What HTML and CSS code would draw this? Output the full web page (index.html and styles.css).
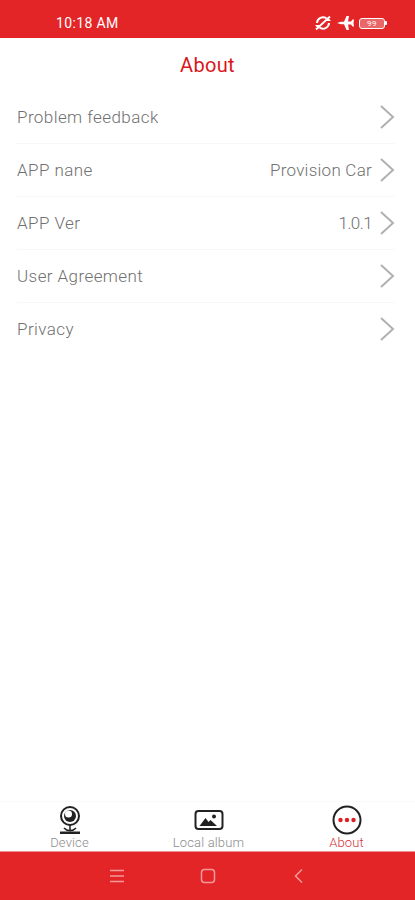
FILE: index.html
```html
<!DOCTYPE html>
<html lang="en">
<head>
<meta charset="utf-8">
<title>About</title>
<link rel="stylesheet" href="styles.css">
</head>
<body>
<div class="app">
  <header class="status">
    <span class="time">10:18 AM</span>
    <div class="status-icons">
      <svg width="18" height="16" viewBox="0 0 18 16"><path d="M3 8a6 6 0 0 1 9.500-4.500M15 8a6 6 0 0 1-9.500 4.500" fill="none" stroke="#fff" stroke-width="2"/><path d="M2 14.500L16 1.500" stroke="#fff" stroke-width="1.800"/><path d="M10.500 6h6.500l-3-3.500zM7.500 10H1l3 3.500z" fill="#fff"/></svg>
      <svg width="17" height="14" viewBox="0 0 17 14"><path d="M0 7l4-1.300h3L9.500 0H12l-1 5.500h3L15.500 3.500H17L16.500 7 17 10.500h-1.500L14 8.500h-3l1 5.500H9.500L7 8.300H4z" fill="#fff"/></svg>
      <div class="battery"><span class="battery-num">99</span></div>
      <span class="battery-nub"></span>
    </div>
  </header>
  <h1 class="title">About</h1>
  <main class="list">
    <div class="row"><span class="label">Problem feedback</span><span class="right"><svg class="chev" width="16" height="26" viewBox="0 0 16 26"><path d="M2 2l12 11L2 24" fill="none" stroke="#b0b0b0" stroke-width="2"/></svg></span></div>
    <div class="row"><span class="label">APP nane</span><span class="right"><span class="value">Provision Car</span><svg class="chev" width="16" height="26" viewBox="0 0 16 26"><path d="M2 2l12 11L2 24" fill="none" stroke="#b0b0b0" stroke-width="2"/></svg></span></div>
    <div class="row"><span class="label">APP Ver</span><span class="right"><span class="value version">1.0.1</span><svg class="chev" width="16" height="26" viewBox="0 0 16 26"><path d="M2 2l12 11L2 24" fill="none" stroke="#b0b0b0" stroke-width="2"/></svg></span></div>
    <div class="row"><span class="label">User Agreement</span><span class="right"><svg class="chev" width="16" height="26" viewBox="0 0 16 26"><path d="M2 2l12 11L2 24" fill="none" stroke="#b0b0b0" stroke-width="2"/></svg></span></div>
    <div class="row"><span class="label">Privacy</span><span class="right"><svg class="chev" width="16" height="26" viewBox="0 0 16 26"><path d="M2 2l12 11L2 24" fill="none" stroke="#b0b0b0" stroke-width="2"/></svg></span></div>
  </main>
  <nav class="tabs">
    <div class="tab">
      <svg width="30" height="30" viewBox="0 0 30 30"><circle cx="15" cy="11" r="9" fill="none" stroke="#222" stroke-width="2"/><circle cx="15" cy="11" r="6" fill="#222"/><circle cx="13.500" cy="9" r="3.500" fill="#fff"/><path d="M15 20v6M9 23a8 8 0 0 0 12 0" fill="none" stroke="#222" stroke-width="1.500"/><path d="M5 26.500h20V29H5z" fill="#222"/></svg>
      <span class="tab-label">Device</span>
    </div>
    <div class="tab">
      <svg width="30" height="30" viewBox="0 0 30 30"><rect x="1.500" y="6" width="27" height="18" rx="3" fill="none" stroke="#222" stroke-width="2"/><path d="M5.500 21l6-8 3 4 2-2 6.500 6z" fill="#222"/><circle cx="20" cy="11.500" r="2" fill="#222"/></svg>
      <span class="tab-label">Local album</span>
    </div>
    <div class="tab active">
      <svg width="30" height="30" viewBox="0 0 30 30"><circle cx="15" cy="15" r="13.500" fill="none" stroke="#222" stroke-width="2"/><circle cx="8.500" cy="15" r="2.200" fill="#e01f25"/><circle cx="15" cy="15" r="2.200" fill="#e01f25"/><circle cx="21.500" cy="15" r="2.200" fill="#e01f25"/></svg>
      <span class="tab-label">About</span>
    </div>
  </nav>
  <footer class="sysnav">
    <svg width="16" height="16" viewBox="0 0 16 16"><path d="M1 2.500h14M1 8h14M1 13.500h14" stroke="#f29a9a" stroke-width="1.500"/></svg>
    <svg width="16" height="16" viewBox="0 0 16 16"><rect x="1.500" y="1.500" width="13" height="13" rx="3" fill="none" stroke="#f29a9a" stroke-width="1.500"/></svg>
    <svg width="16" height="16" viewBox="0 0 16 16"><path d="M11 1.500L4.500 8l6.500 6.500" fill="none" stroke="#f29a9a" stroke-width="1.500"/></svg>
  </footer>
</div>
</body>
</html>
```

FILE: styles.css
```css
* { box-sizing: border-box; }
html, body { margin: 0; padding: 0; background: #fff; }
body { font-family: Roboto, "Noto Sans", sans-serif; }
.app { width: 415px; height: 900px; display: flex; flex-direction: column; overflow: hidden; }
.status {
  height: 38px; flex: none; background: #e32528; color: #fff;
  display: flex; align-items: center; justify-content: space-between;
  padding: 12px 28px 4px 56px;
}
.time { font-size: 14px; font-weight: 400; letter-spacing: .35px; }
.status-icons { display: flex; align-items: center; gap: 5px; }
.battery {
  width: 26px; height: 11px; border: 1px solid #fff; border-radius: 3px;
  display: flex; align-items: center; justify-content: center;
  background: rgba(255,255,255,.3);
}
.battery-nub { width: 2px; height: 4px; background: #fff; margin-left: -5px; border-radius: 0 1px 1px 0; }
.battery-num { font-size: 8px; line-height: 9px; color: #fff; letter-spacing: .5px; }
.title {
  height: 53px; margin: 0; flex: none; display: flex; align-items: center; justify-content: center;
  font-size: 20px; font-weight: 400; color: #d9161c; letter-spacing: .3px;
}
.list { flex: 1; }
.row {
  height: 53px; margin: 0 20px 0 17px; display: flex; align-items: center; justify-content: space-between;
  border-bottom: 1px solid #f7f7f7;
  font-size: 17px; font-weight: 300; color: #707070; letter-spacing: .42px;
}
.row:last-child { border-bottom-color: transparent; }
.right { display: flex; align-items: center; gap: 7px; }
.value { letter-spacing: .25px; }
.version { letter-spacing: -.6px; }
.chev { display: block; }
.tabs { height: 50px; flex: none; display: grid; grid-template-columns: 139px 139px 137px; border-top: 1px solid #f9f9f9; }
.tab { display: flex; flex-direction: column; align-items: center; padding-top: 3px; }
.tab-label { font-size: 13px; font-weight: 300; color: #8c8c8c; line-height: 15px; letter-spacing: .15px; }
.active .tab-label { color: #d4343a; }
.sysnav {
  height: 49px; flex: none; background: #e32528; border-top: 1px solid #f08f90;
  display: flex; align-items: center; justify-content: center; gap: 75px;
}
```
